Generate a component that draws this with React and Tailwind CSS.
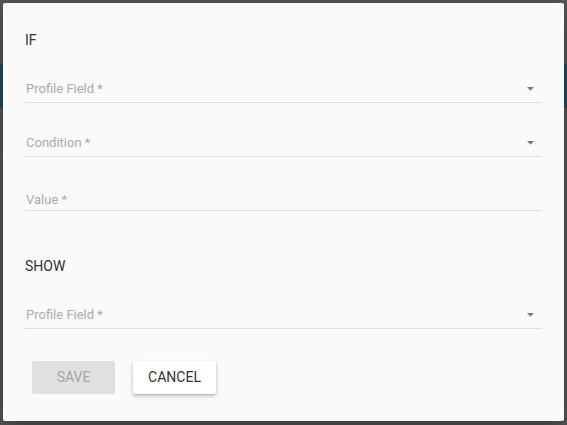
const FONT = { fontFamily: 'Roboto, "Liberation Sans", Arial, sans-serif' };

function Arrow() {
  return (
    <svg viewBox="0 0 24 24" className="h-[17px] w-[17px] mr-[3px] fill-[#7a7a7a]">
      <path d="M7 10l5 5 5-5z" />
    </svg>
  );
}

function SelectField({ label }) {
  return (
    <div className="flex h-[54px] items-end border-b border-[#dedede]">
      <div className="flex w-full items-center justify-between pb-[5px]">
        <span className="pl-[1px] text-[13px] leading-[16px] text-[#ababab]">{label}</span>
        <Arrow />
      </div>
    </div>
  );
}

function TextField({ label }) {
  return (
    <div className="flex h-[54px] items-end border-b border-[#dedede]">
      <span className="pb-[2px] pl-[1px] text-[13px] leading-[16px] text-[#ababab]">{label}</span>
    </div>
  );
}

export default function App() {
  return (
    <div className="relative h-[425px] w-[567px] overflow-hidden bg-[#565656]" style={FONT}>
      {/* page behind the backdrop */}
      <div className="h-[33px]" />
      <div className="h-px bg-[#5e5e5e]" />
      <div className="h-[30px]" />
      <div className="h-[44px] bg-[#254963]" />
      <div className="h-[46px]" />
      <div className="h-px bg-[#5e5e5e]" />

      {/* dialog */}
      <div className="absolute left-[3px] top-[3px] flex h-[418px] w-[561px] flex-col rounded-[2px] bg-[#fafafa] px-[22px] pt-[29px] shadow-[0_8px_24px_rgba(0,0,0,0.35)]">
        <div className="h-[17px] text-[14px] leading-[16px] text-[#333]">IF</div>
        <SelectField label="Profile Field *" />
        <SelectField label="Condition *" />
        <TextField label="Value *" />
        <div className="mt-[47px] h-[17px] text-[14px] leading-[16px] text-[#333]">SHOW</div>
        <SelectField label="Profile Field *" />
        <div className="mt-[32px] flex gap-[18px] pl-[7px]">
          <button className="h-[33px] w-[83px] rounded-[2px] bg-[#e0e0e0] text-[14px] text-[#a6a6a6]">
            SAVE
          </button>
          <button className="h-[33px] w-[83px] rounded-[2px] bg-white text-[14px] text-[#333] shadow-[0_2px_4px_rgba(0,0,0,0.22),0_1px_2px_rgba(0,0,0,0.12)]">
            CANCEL
          </button>
        </div>
      </div>
    </div>
  );
}
